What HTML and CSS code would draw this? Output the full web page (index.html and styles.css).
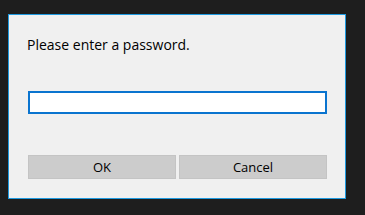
FILE: index.html
```html
<!DOCTYPE html>
<html>
<head>
<meta charset="utf-8">
<link rel="stylesheet" href="styles.css">
</head>
<body>
<div class="dialog">
  <p class="prompt">Please enter a password.</p>
  <div class="field"></div>
  <div class="buttons">
    <div class="btn">OK</div>
    <div class="btn">Cancel</div>
  </div>
</div>
</body>
</html>
```
FILE: styles.css
```css
html, body {
  margin: 0;
  padding: 0;
  background: #1e1e1e;
  width: 365px;
  height: 215px;
  overflow: hidden;
}
body {
  padding: 14px 0 0 8px;
  box-sizing: border-box;
  font-family: "Open Sans", "Noto Sans", sans-serif;
}
.dialog {
  width: 338px;
  height: 185px;
  box-sizing: border-box;
  border: 1px solid #1e9ae0;
  background: #f0f0f0;
  padding: 0 18px 0 19px;
  display: flex;
  flex-direction: column;
}
.prompt {
  margin: 20px 0 0 -1px;
  font-size: 14px;
  line-height: 20px;
  color: #000;
}
.field {
  margin-top: 36px;
  height: 23px;
  box-sizing: border-box;
  border: 2px solid #0a74cf;
  background: #fff;
}
.buttons {
  margin-top: 41px;
  display: flex;
  gap: 3px;
}
.btn {
  flex: 1;
  height: 24px;
  background: #cccccc;
  border: 1px solid #c4c4c4;
  box-sizing: border-box;
  display: flex;
  align-items: center;
  justify-content: center;
  font-size: 13px;
  color: #000;
}
```
